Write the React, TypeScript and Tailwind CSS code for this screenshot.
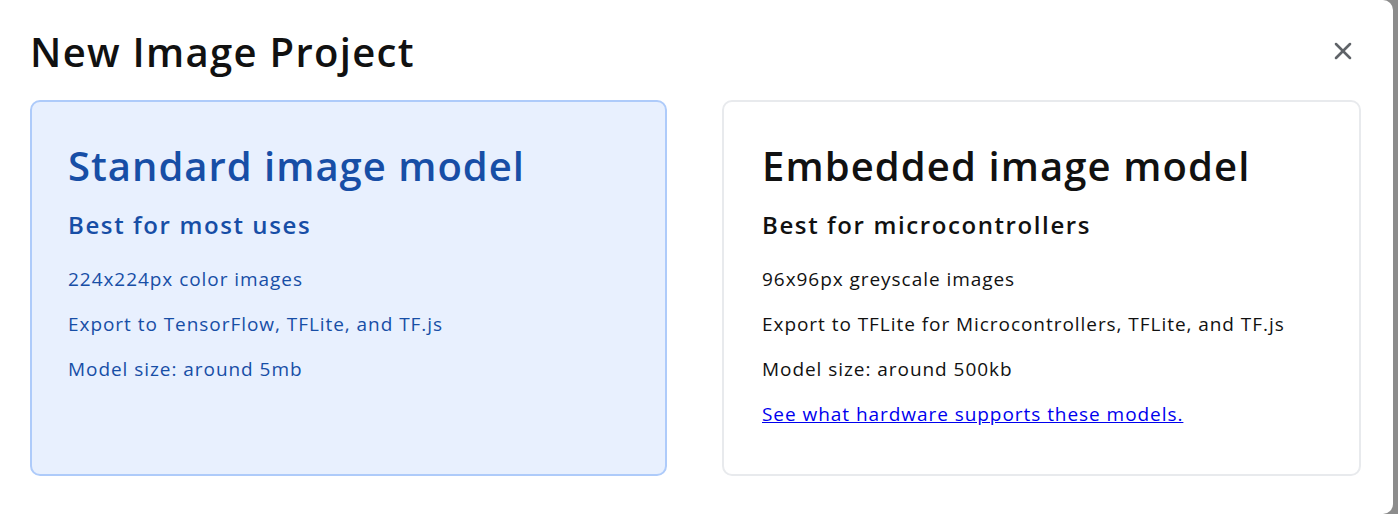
import { X } from "lucide-react";

const font = { fontFamily: '"Open Sans", "Lato", sans-serif' };

export default function App() {
  return (
    <div className="flex h-[514px] w-[1398px] bg-[#8c8c8c]" style={font}>
      <div className="flex h-full w-[1393px] flex-col rounded-r-[10px] bg-white pl-[30px] pr-[32px]">
        <div className="flex h-[100px] items-start justify-between">
          <h1 className="mt-[28px] text-[40px] font-semibold leading-[48px] tracking-[1.3px] text-[#111]">New Image Project</h1>
          <button className="mr-[4px] mt-[37px] text-[#5f6368]">
            <X size={28} strokeWidth={2.2} />
          </button>
        </div>

        <div className="grid grid-cols-[637px_639px] gap-[55px]">
          <div className="h-[376px] rounded-[10px] border-2 border-[#aecbfa] bg-[#e8f0fe] px-[36px] pt-[40px] text-[#174ea6]">
            <h2 className="text-[40px] font-semibold leading-[48px] tracking-[1px]">Standard image model</h2>
            <h3 className="mt-[20px] text-[24px] font-semibold leading-[30px] tracking-[1.6px]">Best for most uses</h3>
            <p className="mt-[27px] text-[19px] leading-[25px] tracking-[0.95px]">224x224px color images</p>
            <p className="mt-[20px] text-[19px] leading-[25px] tracking-[0.95px]">Export to TensorFlow, TFLite, and TF.js</p>
            <p className="mt-[20px] text-[19px] leading-[25px] tracking-[0.95px]">Model size: around 5mb</p>
          </div>

          <div className="h-[376px] rounded-[10px] border-2 border-[#e8eaed] bg-white px-[38px] pt-[40px] text-[#111]">
            <h2 className="text-[40px] font-semibold leading-[48px] tracking-[1.1px]">Embedded image model</h2>
            <h3 className="mt-[20px] text-[24px] font-semibold leading-[30px] tracking-[1.6px]">Best for microcontrollers</h3>
            <p className="mt-[27px] text-[19px] leading-[25px] tracking-[0.95px]">96x96px greyscale images</p>
            <p className="mt-[20px] text-[19px] leading-[25px] tracking-[0.95px]">Export to TFLite for Microcontrollers, TFLite, and TF.js</p>
            <p className="mt-[20px] text-[19px] leading-[25px] tracking-[0.95px]">Model size: around 500kb</p>
            <p className="mt-[20px] text-[19px] leading-[25px] tracking-[0.95px]">
              <a href="#" className="text-[#0000ee] underline">See what hardware supports these models.</a>
            </p>
          </div>
        </div>
      </div>
    </div>
  );
}
